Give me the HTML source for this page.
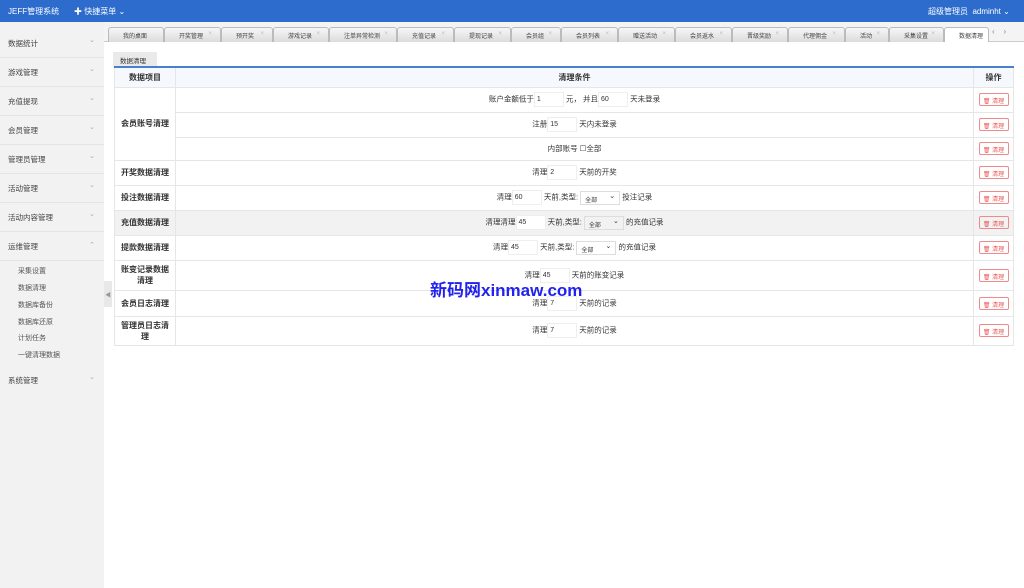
<!DOCTYPE html><html><head><meta charset="utf-8"><style>
*{box-sizing:border-box;margin:0;padding:0}
body{width:1024px;height:588px;overflow:hidden;font-family:"Liberation Sans","Noto Sans CJK SC",sans-serif;font-size:8px;color:#333;background:#fff;position:relative}
.hd{position:absolute;left:0;top:0;width:1024px;height:22px;background:#2d6ccd;color:#fff}
.hd span{position:absolute;top:6px;font-size:8px}
.sb{position:absolute;left:0;top:22px;width:104px;height:566px;background:#f2f2f2}
.sb .it{position:absolute;left:8px;font-size:7.5px;color:#444}
.sb .ar{position:absolute;left:89px;font-size:7px;color:#aaa}
.sb .ln{position:absolute;left:0;width:104px;height:1px;background:#e4e4e4}
.sb .sub{position:absolute;left:18px;font-size:7px;color:#555}
.tabs{position:absolute;left:104px;top:22px;width:920px;height:20px;background:#f4f4f4;border-bottom:1px solid #ccc}
.tab{position:absolute;top:5px;height:15px;background:linear-gradient(#f6f6f6,#dcdcdc);border:1px solid #bbb;border-bottom:none;border-radius:3px 3px 0 0;font-size:6px;color:#444;padding:3px 0 0 14px}
.tab i{position:absolute;right:8px;top:3px;font-style:normal;color:#bbb}
.tab.on{background:#fff}
.subt{position:absolute;left:113px;top:52px;width:44px;height:15px;background:#eaeaea;font-size:6.5px;padding:3px 0 0 7px}
table{position:absolute;left:114px;top:66px;width:900px;border-collapse:collapse;border-top:2px solid #4a7fc9}
td,th{border:1px solid #e6e6e6;text-align:center;font-size:7.5px}
th{background:#f5f8fc;height:20px;font-weight:bold;font-size:8px}
td.l{font-weight:bold;color:#333;font-size:8px;line-height:11px}
.in{display:inline-block;width:30px;height:15px;border:1px solid #eee;text-align:left;padding:3px 0 0 2px;vertical-align:middle;font-size:7px}
.sel{display:inline-block;width:40px;height:14px;border:1px solid #ddd;text-align:left;padding:3px 0 0 4px;vertical-align:middle;font-size:6px;position:relative}
.sel:after{content:"⌄";position:absolute;right:4px;top:0px;font-size:7px}
.btn{display:inline-block;width:30px;height:13px;border:1px solid #f08a8a;border-radius:2px;color:#e55;font-size:6px;padding-top:2px}
tr.hl td{background:#f2f2f2}
.wm{position:absolute;left:430px;top:276px;font-size:17px;font-weight:bold;color:#2222ee}
</style></head><body>
<div class="hd"><span style="left:8px">JEFF管理系统</span><span style="left:74px">✚ 快捷菜单 ⌄</span><span style="left:928px">超级管理员&nbsp; adminht ⌄</span></div>
<div class="sb">
<div class="it" style="top:16px">数据统计</div><div class="ar" style="top:14px">⌄</div><div class="ln" style="top:35px"></div>
<div class="it" style="top:45px">游戏管理</div><div class="ar" style="top:43px">⌄</div><div class="ln" style="top:64px"></div>
<div class="it" style="top:74px">充值提现</div><div class="ar" style="top:72px">⌄</div><div class="ln" style="top:93px"></div>
<div class="it" style="top:103px">会员管理</div><div class="ar" style="top:101px">⌄</div><div class="ln" style="top:122px"></div>
<div class="it" style="top:132px">管理员管理</div><div class="ar" style="top:130px">⌄</div><div class="ln" style="top:151px"></div>
<div class="it" style="top:161px">活动管理</div><div class="ar" style="top:159px">⌄</div><div class="ln" style="top:180px"></div>
<div class="it" style="top:190px">活动内容管理</div><div class="ar" style="top:188px">⌄</div><div class="ln" style="top:209px"></div>
<div class="it" style="top:219px">运维管理</div><div class="ar" style="top:219px">⌃</div><div class="ln" style="top:238px"></div>
<div class="sub" style="top:244px">采集设置</div><div class="sub" style="top:261px">数据清理</div><div class="sub" style="top:278px">数据库备份</div><div class="sub" style="top:295px">数据库还原</div><div class="sub" style="top:311px">计划任务</div><div class="sub" style="top:328px">一键清理数据</div>
<div class="it" style="top:353px">系统管理</div><div class="ar" style="top:351px">⌄</div>
</div>
<div style="position:absolute;left:104px;top:281px;width:8px;height:26px;background:#e8e8e8;font-size:6px;color:#999;padding:9px 0 0 1px">◀</div>
<div class="tabs">
<div class="tab" style="left:4px;width:56px">我的桌面</div>
<div class="tab" style="left:60px;width:57px">开奖管理<i>×</i></div>
<div class="tab" style="left:117px;width:52px">预开奖<i>×</i></div>
<div class="tab" style="left:169px;width:56px">游戏记录<i>×</i></div>
<div class="tab" style="left:225px;width:68px">注单异常检测<i>×</i></div>
<div class="tab" style="left:293px;width:57px">充值记录<i>×</i></div>
<div class="tab" style="left:350px;width:57px">提现记录<i>×</i></div>
<div class="tab" style="left:407px;width:50px">会员组<i>×</i></div>
<div class="tab" style="left:457px;width:57px">会员列表<i>×</i></div>
<div class="tab" style="left:514px;width:57px">赠送活动<i>×</i></div>
<div class="tab" style="left:571px;width:57px">会员返水<i>×</i></div>
<div class="tab" style="left:628px;width:56px">晋级奖励<i>×</i></div>
<div class="tab" style="left:684px;width:57px">代理佣金<i>×</i></div>
<div class="tab" style="left:741px;width:44px">活动<i>×</i></div>
<div class="tab" style="left:785px;width:55px">采集设置<i>×</i></div>
<div class="tab on" style="left:840px;width:45px">数据清理</div>
<div style="position:absolute;left:888px;top:5px;font-size:8px;color:#888">‹&nbsp;&nbsp;&nbsp;&nbsp;›</div>
</div>
<div class="subt">数据清理</div>
<table>
<tr><th style="width:61px">数据项目</th><th>清理条件</th><th style="width:40px">操作</th></tr>
<tr style="height:25px"><td class="l" rowspan="3">会员账号清理</td><td>账户金额低于<span class="in">1</span> 元， 并且<span class="in">60</span> 天未登录</td><td><span class="btn">🗑 清理</span></td></tr>
<tr style="height:25px"><td>注册<span class="in">15</span> 天内未登录</td><td><span class="btn">🗑 清理</span></td></tr>
<tr style="height:23px"><td>内部账号 ☐全部</td><td><span class="btn">🗑 清理</span></td></tr>
<tr style="height:25px"><td class="l">开奖数据清理</td><td>清理<span class="in">2</span> 天前的开奖</td><td><span class="btn">🗑 清理</span></td></tr>
<tr style="height:25px"><td class="l">投注数据清理</td><td>清理<span class="in">60</span> 天前,类型: <span class="sel">全部</span> 投注记录</td><td><span class="btn">🗑 清理</span></td></tr>
<tr class="hl" style="height:25px"><td class="l">充值数据清理</td><td>清理清理<span class="in" style="background:#fff">45</span> 天前,类型: <span class="sel">全部</span> 的充值记录</td><td><span class="btn">🗑 清理</span></td></tr>
<tr style="height:25px"><td class="l">提款数据清理</td><td>清理<span class="in">45</span> 天前,类型: <span class="sel">全部</span> 的充值记录</td><td><span class="btn">🗑 清理</span></td></tr>
<tr style="height:30px"><td class="l">账变记录数据<br>清理</td><td>清理<span class="in">45</span> 天前的账变记录</td><td><span class="btn">🗑 清理</span></td></tr>
<tr style="height:26px"><td class="l">会员日志清理</td><td>清理<span class="in">7</span> 天前的记录</td><td><span class="btn">🗑 清理</span></td></tr>
<tr style="height:29px"><td class="l">管理员日志清<br>理</td><td>清理<span class="in">7</span> 天前的记录</td><td><span class="btn">🗑 清理</span></td></tr>
</table>
<div class="wm">新码网xinmaw.com</div>
</body></html>
